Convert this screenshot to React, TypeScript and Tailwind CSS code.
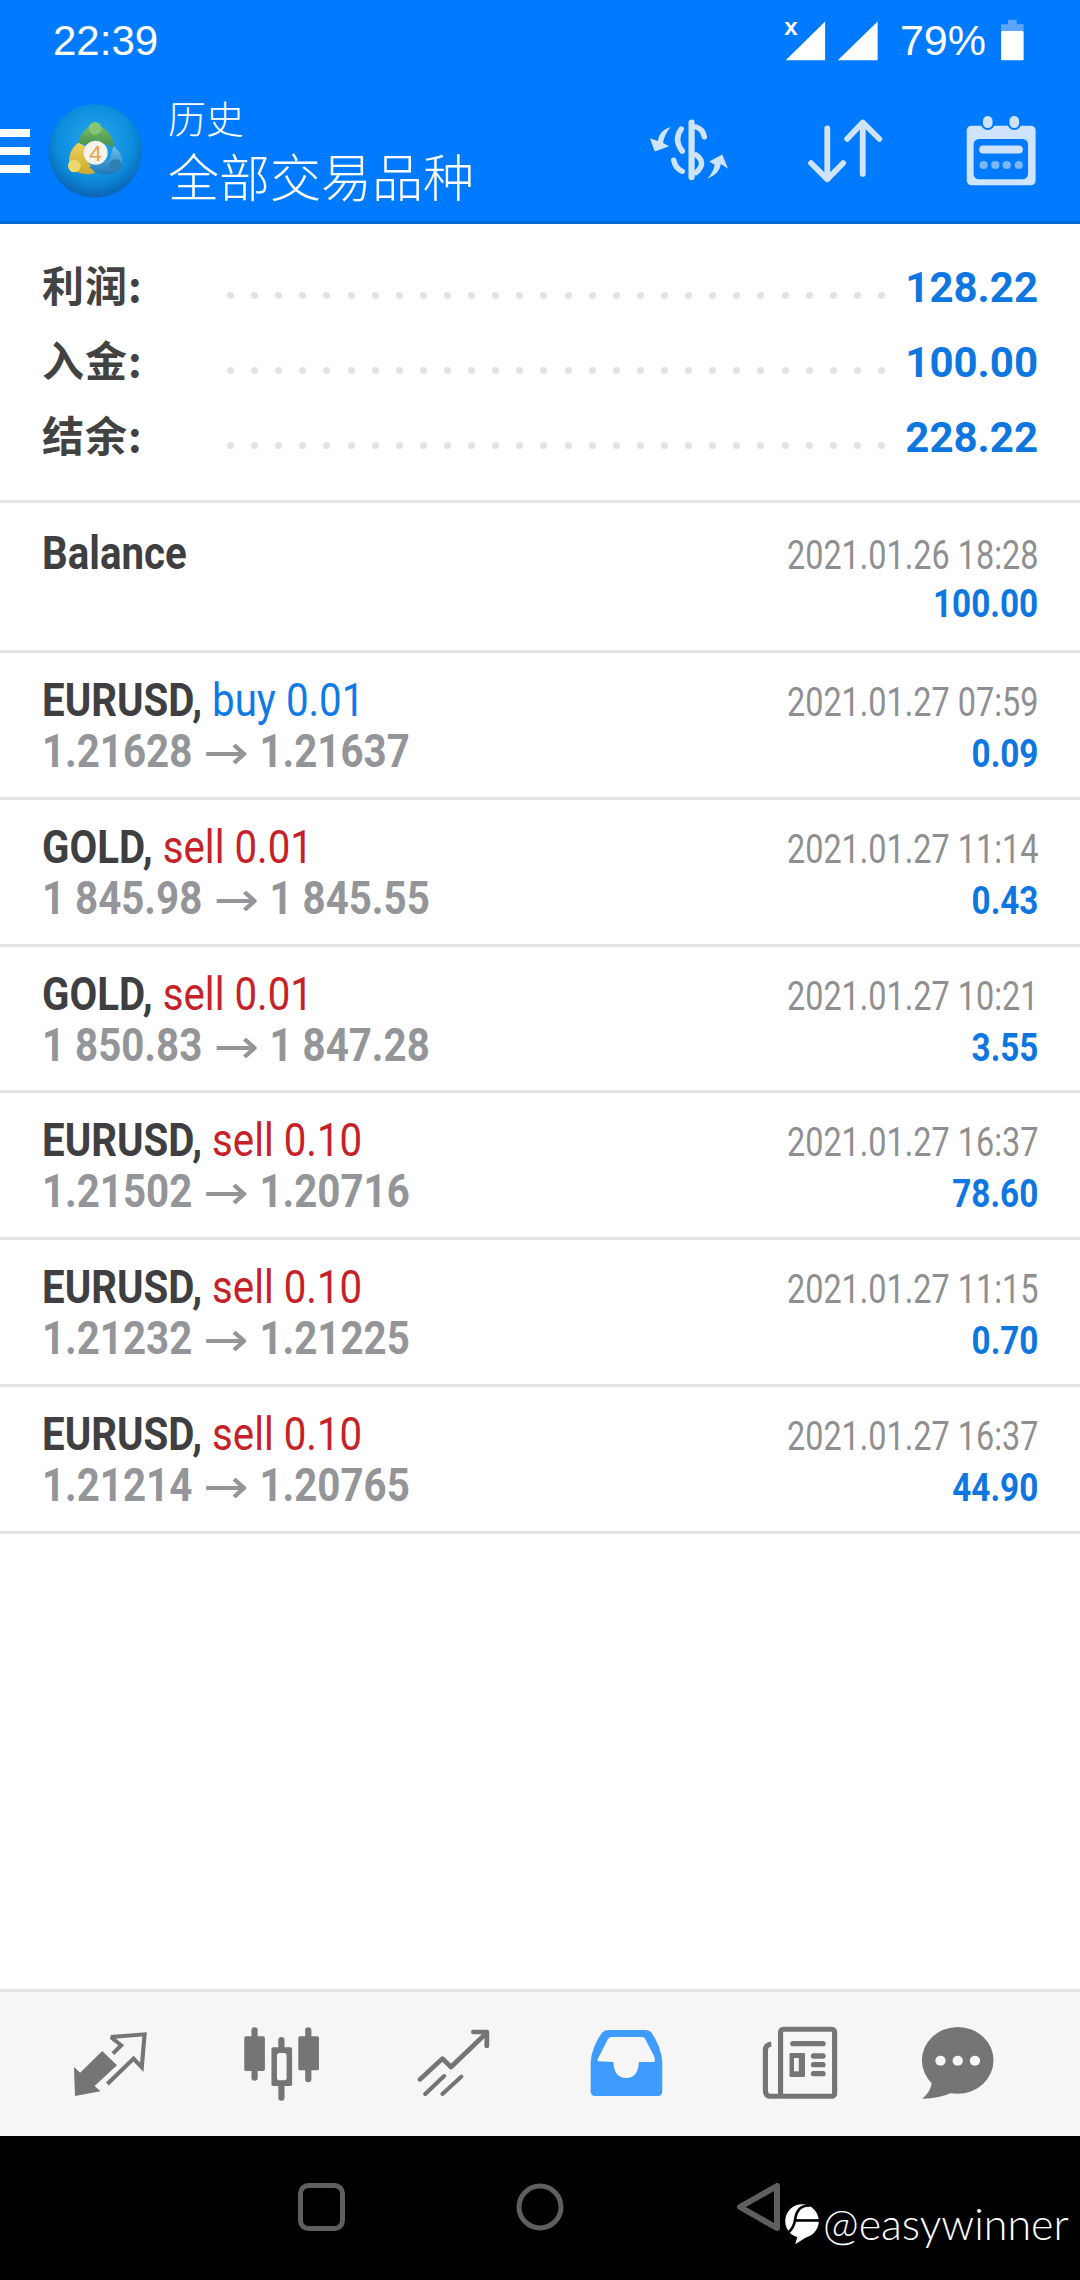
import React from "react";

const ROBOTO = "font-['Roboto',sans-serif]";
const CJK = "font-['Noto_Sans_CJK_SC',sans-serif]";

function HeaderIcon({ box, children }: { box: string; children: React.ReactNode }) {
  return (
    <svg width="156" height="141" viewBox={box} preserveAspectRatio="none" className="shrink-0">
      {children}
    </svg>
  );
}

function Logo() {
  return (
    <svg width="100" height="100" viewBox="0 0 300 300" className="shrink-0">
      <defs>
        <radialGradient id="lg" cx="50%" cy="40%" r="62%">
          <stop offset="0%" stopColor="#2aa8ee" />
          <stop offset="65%" stopColor="#0d8ddd" />
          <stop offset="100%" stopColor="#0a5fae" />
        </radialGradient>
        <linearGradient id="gr" x1="0" y1="0" x2="0" y2="1">
          <stop offset="0%" stopColor="#7cbf6a" />
          <stop offset="100%" stopColor="#3f8f4c" />
        </linearGradient>
        <linearGradient id="ye" x1="0" y1="0" x2="0" y2="1">
          <stop offset="0%" stopColor="#efd35a" />
          <stop offset="100%" stopColor="#c9a92e" />
        </linearGradient>
        <linearGradient id="bl" x1="0" y1="0" x2="0" y2="1">
          <stop offset="0%" stopColor="#6fc0ea" />
          <stop offset="100%" stopColor="#1f75b5" />
        </linearGradient>
      </defs>
      <circle cx="150" cy="150" r="140" fill="url(#lg)" />
      <path d="M150 68 C185 82 208 105 208 142 L185 130 L120 130 L100 128 C100 105 118 82 150 68Z" fill="url(#gr)" />
      <circle cx="150" cy="82" r="19" fill="#86c777" />
      <path d="M100 125 L120 135 L118 165 L150 216 C120 226 85 215 72 185 C72 160 80 140 100 125Z" fill="url(#ye)" />
      <circle cx="88" cy="195" r="19" fill="#ecd86c" />
      <path d="M205 135 C232 155 240 185 225 205 C200 228 165 228 132 198 L165 190 L195 175Z" fill="url(#bl)" />
      <circle cx="212" cy="193" r="18" fill="#2c7eae" />
      <circle cx="152" cy="155" r="36" fill="#f6f3ec" />
      <text x="152" y="180" textAnchor="middle" fontSize="68" fontFamily="Liberation Sans" fill="#eda24a">4</text>
    </svg>
  );
}

function StatusBar() {
  return (
    <div className="flex h-[80px] items-center justify-between pl-[53px] pr-[56px] text-white font-['Liberation_Sans',sans-serif] text-[42px]">
      <span>22:39</span>
      <div className="flex items-center">
        <svg width="96" height="52" viewBox="705 30 280 157" preserveAspectRatio="none" className="-mt-[8px]">
          <text x="706" y="105" fontSize="70" fontFamily="Liberation Sans" fontWeight="700" fill="#fff">x</text>
          <path d="M710 182 L825 65 V182Z" fill="#fff" />
          <path d="M862 182 L978 65 V182Z" fill="#fff" />
        </svg>
        <span className="ml-[20px] text-[43px]">79%</span>
        <svg width="23" height="42" viewBox="1340 56 66 126" preserveAspectRatio="none" className="ml-[15px]">
          <path d="M1360 58 H1385 V72 H1405 V92 H1340 V72 H1360Z" fill="#5ea6fb" />
          <rect x="1340" y="92" width="65" height="88" rx="3" fill="#fff" />
        </svg>
      </div>
    </div>
  );
}

function Toolbar() {
  return (
    <div className="flex h-[144px] items-center border-b-[3px] border-[#0068cf]">
      <div className="flex flex-col gap-[10px]">
        <div className="h-[8px] w-[30px] bg-white" />
        <div className="h-[8px] w-[30px] bg-white" />
        <div className="h-[8px] w-[30px] bg-white" />
      </div>
      <div className="ml-[15px]">
        <Logo />
      </div>
      <div className={`ml-[23px] flex flex-col text-white ${CJK} -mt-[2px]`}>
        <span className="text-[38px] leading-[46px] font-light">历史</span>
        <span className="mt-[4px] text-[51px] leading-[62px] font-light">全部交易品种</span>
      </div>
      <div className="ml-auto flex items-center pr-[1px]">
        <HeaderIcon box="209 240 453 426">
          <g fill="none" stroke="#cfe3fb" strokeLinecap="round">
            <path d="M443 368 V534" strokeWidth="18" />
            <path d="M456 382 Q476 388 480 412" strokeWidth="16" />
            <path d="M413 388 Q390 420 416 455" strokeWidth="16" />
            <path d="M456 466 Q488 490 456 520" strokeWidth="16" />
            <path d="M391 482 Q396 508 416 516" strokeWidth="16" />
          </g>
          <path d="M382 382 Q348 392 345 424 L322 416 L336 456 L378 440 L360 430 Q364 405 382 382Z" fill="#cfe3fb" />
          <path d="M488 538 Q524 525 528 494 L549 508 L532 465 L494 486 L510 496 Q506 520 488 538Z" fill="#cfe3fb" />
        </HeaderIcon>
        <HeaderIcon box="662 240 453 426">
          <g fill="none" stroke="#cfe3fb" strokeWidth="17" strokeLinecap="round" strokeLinejoin="round">
            <path d="M837 386 V538" />
            <path d="M790 491 L837 540 L883 491" />
            <path d="M940 376 V524" />
            <path d="M895 418 L940 368 L988 418" />
          </g>
        </HeaderIcon>
        <HeaderIcon box="1115 240 453 426">
          <rect x="1242" y="378" width="200" height="180" rx="14" fill="#cfe3fb" />
          <rect x="1262" y="418" width="158" height="122" rx="16" fill="#007bff" />
          <rect x="1286" y="346" width="34" height="42" rx="17" fill="#cfe3fb" stroke="#007bff" strokeWidth="6" />
          <rect x="1363" y="346" width="34" height="42" rx="17" fill="#cfe3fb" stroke="#007bff" strokeWidth="6" />
          <rect x="1278" y="438" width="127" height="24" rx="12" fill="#cfe3fb" />
          <circle cx="1291" cy="497" r="12" fill="#7db8fb" />
          <circle cx="1325" cy="497" r="12" fill="#7db8fb" />
          <circle cx="1358" cy="497" r="12" fill="#7db8fb" />
          <circle cx="1393" cy="497" r="12" fill="#7db8fb" />
        </HeaderIcon>
      </div>
    </div>
  );
}

function SummaryRow({ label, value }: { label: string; value: string }) {
  return (
    <div className="flex h-[75px] items-center">
      <span className={`-mt-[9px] w-[185px] shrink-0 ${CJK} text-[42px] font-bold tracking-[1px] text-[#424242]`}>{label}</span>
      <div className="mt-[15px] flex w-[658px] shrink-0 justify-between">
        {Array.from({ length: 28 }).map((_, i) => (
          <span key={i} className="h-[7px] w-[7px] rounded-full bg-[#e2e2e2]" />
        ))}
      </div>
      <span className={`ml-auto ${ROBOTO} text-[42px] font-bold text-[#0d76e0]`}>{value}</span>
    </div>
  );
}

function Row({
  symbol,
  side,
  sideColor,
  prices,
  date,
  amount,
  first,
}: {
  symbol: string;
  side?: string;
  sideColor?: string;
  prices?: [string, string];
  date: string;
  amount: string;
  first?: boolean;
}) {
  return (
    <div
      className={`border-b-[3px] border-[#e4e4e4] px-[42px] ${ROBOTO} ${first ? "h-[150px] pt-[25px]" : "h-[146.8px] pt-[22px]"}`}
    >
      <div className="flex h-[51px] items-baseline justify-between whitespace-nowrap">
        <span className="inline-block origin-left scale-x-[0.875] text-[46px] leading-[51px]">
          <span className="font-bold text-[#3f3f41]">{symbol}</span>
          {side && <span className={`font-normal ${sideColor}`}> {side}</span>}
        </span>
        <span className="inline-block origin-right scale-x-[0.81] text-[40px] leading-[51px] text-[#8f8f91]">{date}</span>
      </div>
      <div className="flex h-[51px] items-baseline justify-between whitespace-nowrap">
        <span className="inline-block origin-left scale-x-[0.875] text-[46px] leading-[51px] font-bold text-[#939598]">
          {prices && (
            <>
              {prices[0]}{" "}
              <span className="inline-block w-[54px] scale-x-[1.3] text-center align-[-2px] font-['DejaVu_Sans',sans-serif] text-[48px] leading-[0] font-normal">→</span>{" "}
              {prices[1]}
            </>
          )}
        </span>
        <span className="inline-block origin-right scale-x-[0.875] text-[38px] leading-[51px] font-bold text-[#0d76e0]">{amount}</span>
      </div>
    </div>
  );
}

const BLUE = "text-[#0f7ae5]";
const RED = "text-[#c62128]";

function NavIcon({ x, children }: { x: number; children: React.ReactNode }) {
  return (
    <svg width="172" height="146" viewBox={`${x} 30 499.5 438`} preserveAspectRatio="none" className="shrink-0">
      {children}
    </svg>
  );
}

function BottomBar() {
  const g = "#757575";
  return (
    <div className="flex h-[147px] border-t-[3px] border-[#e4e4e4] bg-[#f6f6f6] pl-[23px]">
      <NavIcon x={67}>
        <path d="M215 255 L233 272 L297 207 L340 250 L275 312 L292 328 L218 342Z" fill={g} />
        <path d="M322 165 L420 157 L412 256 L388 230 L312 306 M322 165 L352 190 L328 215" fill="none" stroke={g} strokeWidth="12" strokeLinejoin="miter" />
      </NavIcon>
      <NavIcon x={566}>
        <g stroke={g} strokeWidth="18" strokeLinecap="round">
          <path d="M739 145 V287" />
          <path d="M817 174 V347" />
          <path d="M895 145 V292" />
        </g>
        <rect x="709" y="163" width="60" height="104" rx="5" fill={g} />
        <rect x="788" y="196" width="60" height="116" rx="5" fill={g} />
        <rect x="804" y="213" width="28" height="82" rx="8" fill="#f6f6f6" />
        <rect x="866" y="163" width="60" height="102" rx="5" fill={g} />
      </NavIcon>
      <NavIcon x={1066}>
        <g fill="none" stroke={g} strokeLinecap="round" strokeLinejoin="round">
          <path d="M1220 292 L1285 230 L1310 255 L1408 158" strokeWidth="14" />
          <path d="M1375 150 L1414 150 L1414 192" strokeWidth="14" />
          <path d="M1235 336 L1290 282" strokeWidth="12" />
          <path d="M1285 336 L1340 284" strokeWidth="12" />
        </g>
      </NavIcon>
      <NavIcon x={-3}>
        <path d="M147 240 Q150 195 180 152 Q186 144 198 144 L305 144 Q318 144 324 152 Q352 195 355 240 V328 Q355 342 342 342 H160 Q147 342 147 328Z" fill="#3f9cff" />
        <path d="M168 238 Q166 230 172 222 L197 172 Q200 165 208 165 H295 Q303 165 306 172 L331 222 Q336 232 332 240 H287 Q285 288 250 288 Q215 288 213 240Z" fill="#f6f6f6" />
      </NavIcon>
      <NavIcon x={497}>
        <rect x="699" y="142" width="157" height="201" rx="8" fill="none" stroke={g} strokeWidth="15" />
        <path d="M672 186 Q655 188 655 205 V326 Q655 343 672 343 H700" fill="none" stroke={g} strokeWidth="15" />
        <path d="M735 185 H822 M795 222 H822 M795 248 H822 M795 275 H822" stroke={g} strokeWidth="16" strokeLinecap="round" />
        <rect x="725" y="213" width="45" height="72" rx="4" fill={g} />
        <rect x="738" y="228" width="14" height="40" fill="#f6f6f6" />
      </NavIcon>
      <NavIcon x={996}>
        <ellipse cx="1213" cy="235" rx="104" ry="100" fill={g} />
        <path d="M1138 300 Q1135 330 1110 350 Q1160 350 1200 330Z" fill={g} />
        <circle cx="1163" cy="236" r="15" fill="#f6f6f6" />
        <circle cx="1213" cy="236" r="15" fill="#f6f6f6" />
        <circle cx="1263" cy="236" r="15" fill="#f6f6f6" />
      </NavIcon>
    </div>
  );
}

function SystemNav() {
  const c = "#5f5f5f";
  return (
    <div className="relative flex h-[144px] items-center bg-black pl-[298px] pb-[3px]">
      <svg width="47" height="48" viewBox="0 0 47 48" className="shrink-0">
        <rect x="2.5" y="2.5" width="42" height="43" rx="8" fill="none" stroke={c} strokeWidth="5" />
      </svg>
      <svg width="48" height="48" viewBox="0 0 48 48" className="ml-[171px] shrink-0">
        <circle cx="24" cy="24" r="21" fill="none" stroke={c} strokeWidth="5" />
      </svg>
      <svg width="46" height="50" viewBox="0 0 46 50" className="ml-[172px] shrink-0">
        <path d="M4 25 L41 4 V46Z" fill="none" stroke={c} strokeWidth="6" strokeLinejoin="round" />
      </svg>
      <div className="absolute left-[784px] top-[66px] flex items-center">
        <svg width="36" height="42" viewBox="160 62 110 130" className="shrink-0">
          <circle cx="215" cy="118" r="52" fill="#fff" />
          <path d="M194 190 L204 155 L238 162Z" fill="#fff" />
          <path d="M240 70 Q200 68 194 112 Q190 140 172 154" fill="none" stroke="#000" strokeWidth="8" />
          <path d="M196 116 H270" fill="none" stroke="#000" strokeWidth="8" />
        </svg>
        <span className="ml-[3px] font-['Lato',sans-serif] text-[43px] font-light leading-[44px] text-white">@easywinner</span>
      </div>
    </div>
  );
}

export default function App() {
  return (
    <div className="flex h-[2280px] w-[1080px] flex-col overflow-hidden bg-white">
      <div className="bg-[#007bff]">
        <StatusBar />
        <Toolbar />
      </div>
      <div className="h-[279px] shrink-0 border-b-[3px] border-[#e4e4e4] px-[42px] pt-[26px]">
        <SummaryRow label="利润:" value="128.22" />
        <SummaryRow label="入金:" value="100.00" />
        <SummaryRow label="结余:" value="228.22" />
      </div>
      <Row first symbol="Balance" date="2021.01.26 18:28" amount="100.00" />
      <Row symbol="EURUSD," side="buy 0.01" sideColor={BLUE} prices={["1.21628", "1.21637"]} date="2021.01.27 07:59" amount="0.09" />
      <Row symbol="GOLD," side="sell 0.01" sideColor={RED} prices={["1 845.98", "1 845.55"]} date="2021.01.27 11:14" amount="0.43" />
      <Row symbol="GOLD," side="sell 0.01" sideColor={RED} prices={["1 850.83", "1 847.28"]} date="2021.01.27 10:21" amount="3.55" />
      <Row symbol="EURUSD," side="sell 0.10" sideColor={RED} prices={["1.21502", "1.20716"]} date="2021.01.27 16:37" amount="78.60" />
      <Row symbol="EURUSD," side="sell 0.10" sideColor={RED} prices={["1.21232", "1.21225"]} date="2021.01.27 11:15" amount="0.70" />
      <Row symbol="EURUSD," side="sell 0.10" sideColor={RED} prices={["1.21214", "1.20765"]} date="2021.01.27 16:37" amount="44.90" />
      <div className="flex-1" />
      <BottomBar />
      <SystemNav />
    </div>
  );
}
